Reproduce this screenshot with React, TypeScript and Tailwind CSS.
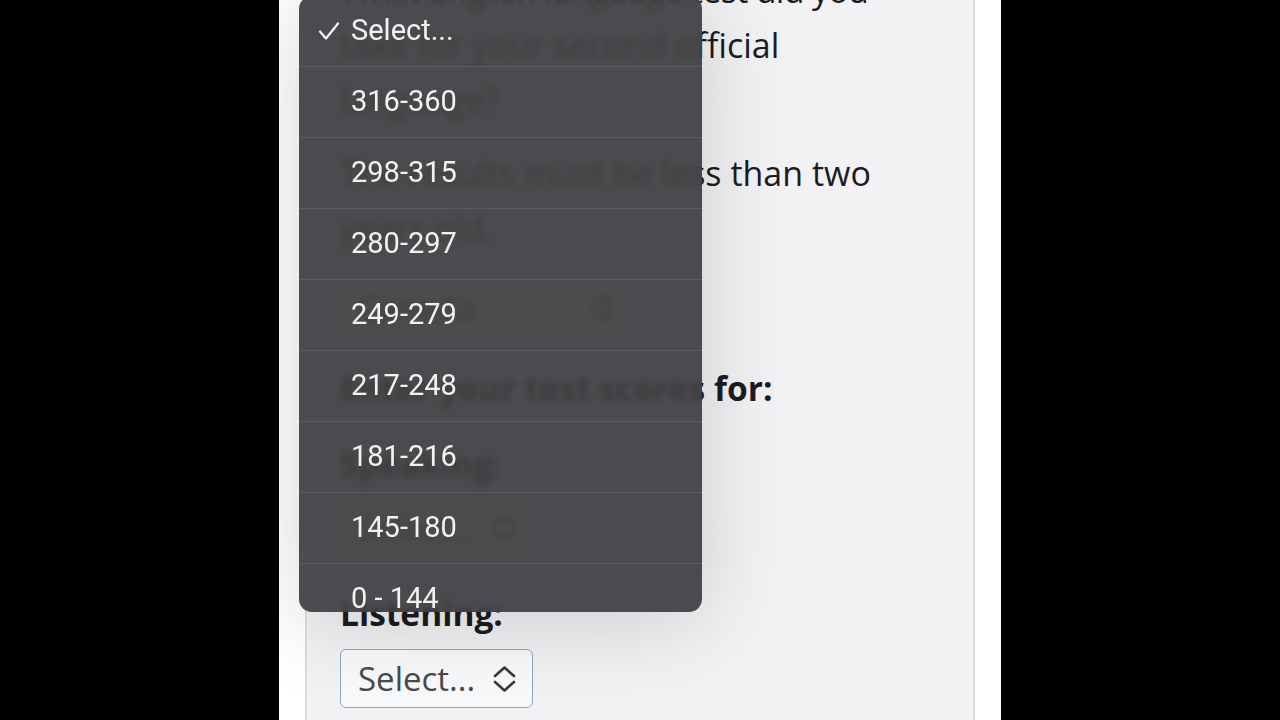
import React from "react";

const ranges = ["316-360", "298-315", "280-297", "249-279", "217-248", "181-216", "145-180", "0 - 144", "Not taken"];

function UpDown() {
    return (
        <svg width="27" height="30" viewBox="0 0 27 30" fill="none" stroke="#3a3a3c" strokeWidth="2.6" strokeLinecap="round" strokeLinejoin="round">
            <path d="M4 12 L13.5 3.5 L23 12" />
            <path d="M4 18 L13.5 26.5 L23 18" />
        </svg>
    );
}

function SelectBox({label, width}: {label: string; width: string}) {
    return (
        <div className={`flex items-center justify-between h-[59px] ${width} pl-[17px] pr-[14px] rounded-[6px] border-[1.5px] border-[#88abc8] bg-[#f7f9fb]`}>
            <span className="text-[33px] text-[#4a4a4a] leading-none">{label}</span>
            <UpDown />
        </div>
    );
}

export default function App() {
    return (
        <div className="w-full h-[720px] bg-black flex justify-center overflow-hidden">
            <div className="relative w-[722px] h-[720px] bg-white overflow-hidden font-['Open_Sans',sans-serif]">
                {/* Form card */}
                <div className="flex flex-col ml-[26px] w-[670px] h-full bg-[#f2f1f4] border-x-2 border-[#dddce1] pl-[33px] text-[#1c1c1e]">
                    <p className="mt-[-37px] text-[34px] leading-[55px]">
                        <span className="tracking-[-0.7px]">What English language test did you</span><br />
                        take for your second official<br />
                        language?
                    </p>
                    <p className="mt-[18px] text-[34px] leading-[55px]">
                        The results must be less than two<br />
                        years old.
                    </p>
                    <div className="mt-[22px]">
                        <SelectBox label="Canada" width="w-[290px]" />
                    </div>
                    <h3 className="mt-[24px] text-[33.5px] leading-[55px] font-bold">Enter your test scores for:</h3>
                    <label className="block mt-[21px] text-[33.5px] leading-[55px] font-bold">Speaking:</label>
                    <div className="mt-[6px]">
                        <SelectBox label="Select..." width="w-[193px]" />
                    </div>
                    <label className="block mt-[29px] text-[33.5px] leading-[55px] font-bold">Listening:</label>
                    <div className="mt-[8px]">
                        <SelectBox label="Select..." width="w-[193px]" />
                    </div>
                </div>

                {/* Native picker menu */}
                <div className="absolute left-[20px] top-[-4px] w-[403px] h-[616px] rounded-[13px] overflow-hidden bg-[rgba(62,61,65,0.93)] backdrop-blur-[3px] shadow-[0_8px_90px_rgba(0,0,0,0.16)] font-['Roboto',sans-serif]">
                    <div className="flex items-center h-[71px] border-b border-[#5c5b5f]">
                        <svg className="ml-[19px]" width="22" height="20" viewBox="0 0 22 20" fill="none" stroke="#f4f4f4" strokeWidth="2.3" strokeLinecap="round" strokeLinejoin="round">
                            <path d="M2 10.5 L8 17.5 L20 2.5" />
                        </svg>
                        <span className="ml-[11px] text-[29px] text-[#f2f2f2]">Select...</span>
                    </div>
                    {ranges.map(r => (
                        <div key={r} className="flex items-center h-[71px] border-b border-[#5c5b5f] pl-[52px]">
                            <span className="text-[29px] text-[#f2f2f2]">{r}</span>
                        </div>
                    ))}
                </div>
            </div>
        </div>
    );
}
